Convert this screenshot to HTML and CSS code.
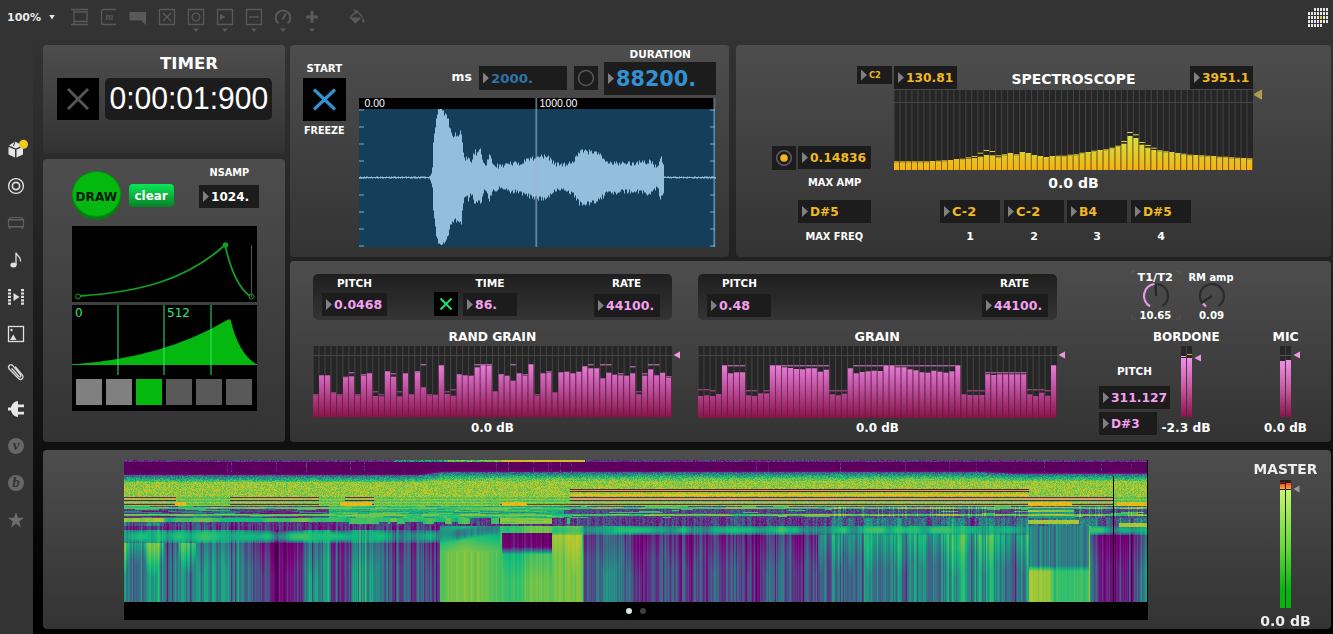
FILE: index.html
```html
<!DOCTYPE html>
<html lang="en">
<head>
<meta charset="utf-8">
<title>Granular patch</title>
<link rel="stylesheet" href="styles.css">
</head>
<body>
<div class="app">
  <nav class="sidebar">
    <svg class="side-icon" viewBox="0 0 24 24"><path fill="#e6e6e6" d="M4.500 10l6.500 2.500v8l-6.500-3zM12.500 12.500l6.500-2.500v7.500l-6.500 3zM5 8.500L11 4.500l7.500 4-6.700 3z"/><path d="M11 4.500l-1.500 4.500" stroke="#333" fill="none"/><circle cx="19.500" cy="7.300" r="4.500" fill="#f0cc20"/></svg>
    <svg class="side-icon" viewBox="0 0 24 24" fill="none" stroke="#e0e0e0"><circle cx="12" cy="12" r="7.400" stroke-width="1.400"/><circle cx="12" cy="12" r="3.600" stroke-width="1.700"/></svg>
    <svg class="side-icon" viewBox="0 0 24 24" fill="none" stroke="#626262" stroke-width="1.200"><path d="M4.500 8.500h15v7.500h-15zM5.500 6.500h13M4 9h16M4 15.500h16M6 6v2.500M18 6v2.500M6 16v2.500M18 16v2.500"/></svg>
    <svg class="side-icon" viewBox="0 0 24 24"><ellipse cx="9.500" cy="17" rx="3.100" ry="2.500" fill="#e0e0e0"/><path d="M12 17V4.500c.5 3.500 5 3.800 4.500 9" fill="none" stroke="#e0e0e0" stroke-width="1.300"/></svg>
    <svg class="side-icon" viewBox="0 0 24 24"><path d="M5.500 4v16M18.500 4v16" stroke="#e0e0e0" stroke-width="3" stroke-dasharray="2.200 1.200"/><path d="M9.500 8l6 4-6 4z" fill="#e0e0e0"/></svg>
    <svg class="side-icon" viewBox="0 0 24 24"><rect x="4.500" y="4.500" width="15" height="15" fill="none" stroke="#e0e0e0" stroke-width="1.300"/><path d="M6 18l3.300-5.500L12.500 18z" fill="#e0e0e0"/><circle cx="7.500" cy="8" r="1.200" fill="#e0e0e0"/></svg>
    <svg class="side-icon" viewBox="0 0 24 24" fill="none" stroke="#d8d8d8" stroke-width="1.300" stroke-linecap="round"><path d="M11.500 7l6.500 7.700c2.500 3.200-.8 6.300-3.500 3.800L5.500 9.300C3 6.300 6.300 3.300 8.800 5.600l7.700 9.200c1 1.700-.7 2.600-1.800 1.500L8 8.800"/></svg>
    <svg class="side-icon" viewBox="0 0 24 24" fill="#e6e6e6"><path d="M4 10.500h3C8 7 10 4.500 14 4v3.500h6v2.800h-6v4.400h6v2.800h-6V20c-4-.5-6-3-7-6.500H4z"/></svg>
    <div class="side-badge"><span>v</span></div>
    <div class="side-badge"><span>b</span></div>
    <svg class="side-icon" viewBox="0 0 24 24" fill="#6c6c6c"><path d="M12 4l2 5.800h6l-4.800 3.600 1.800 6-5-3.700-5 3.700 1.800-6L4 9.800h6z"/></svg>
  </nav>

  <main class="main">
    <header class="toolbar">
      <div class="zoom-level"><span class="t" data-w="36">100%</span><i class="caret"></i></div>
      <div class="tools">
        <svg class="tool" viewBox="0 0 18 25"><path d="M0 1.500h17M3 1v16M0 16.500h17M3 4h13M3 13.500h13M16 3v12"/></svg>
        <svg class="tool" viewBox="0 0 18 25"><path d="M16 1.500H3.500a2 2 0 0 0-2 2v11a2 2 0 0 0 2 2H16"/><text x="5.500" y="12">m</text></svg>
        <svg class="tool" viewBox="0 0 18 25"><path class="solid" d="M.5 4h16.500v13l-5-4.500H.5z"/></svg>
        <svg class="tool" viewBox="0 0 18 25"><path d="M1.500 1.500h15v15h-15zM5 5l8 8M13 5l-8 8"/></svg>
        <svg class="tool" viewBox="0 0 18 25"><path d="M1.500 1.500h15v15h-15z"/><circle cx="9" cy="9" r="3.800"/><path class="solid" d="M6 20.500h6l-3 3.500z"/></svg>
        <svg class="tool" viewBox="0 0 18 25"><path d="M1.500 1.500h15v15h-15z"/><path class="solid" d="M4 6l5.500 3L4 12zM6 20.500h6l-3 3.500z"/></svg>
        <svg class="tool" viewBox="0 0 18 25"><path d="M1.500 1.500h15v15h-15zM4 9h10"/><path class="solid" d="M6 20.500h6l-3 3.500z"/></svg>
        <svg class="tool" viewBox="0 0 18 25"><path class="bold" d="M4.500 15.500a7.300 7.300 0 1 1 9 0M8.500 11.500L12 5.500"/><path class="solid" d="M6 20.500h6l-3 3.500z"/></svg>
        <svg class="tool" viewBox="0 0 18 25"><path class="plus" d="M9 3v12M3 9h12"/><path class="solid" d="M6 20.500h6l-3 3.500z"/></svg>
        <svg class="tool bucket" viewBox="0 0 18 25"><path class="solid" d="M1 9.500h12.500L7.500 15.500zM14.500 9.500c2 2.500 2.800 4 1.500 5s-2.500-1-1.500-5z"/><path d="M2 9.500L9 3l5.500 6M6 1.500l3 4"/></svg>
      </div>
      <div class="led-matrix" id="leds"></div>
    </header>

    <div class="board">
      <div class="upper">
        <div class="left-stack">
          <section class="panel timer">
            <div class="label size-l timer-title"><span class="t" data-w="58">TIMER</span></div>
            <div class="timer-row">
              <div class="toggle big"><svg viewBox="0 0 42 42"><path d="M11 11l20 20M31 11l-20 20" stroke="#555" stroke-width="3"/></svg></div>
              <div class="clock"><span class="t" data-w="159">0:00:01:900</span></div>
            </div>
          </section>

          <section class="panel envelope">
            <div class="envelope-head">
              <div class="draw"><span class="t" data-w="42">DRAW</span></div>
              <div class="clear"><span class="t" data-w="33">clear</span></div>
              <div class="nsamp">
                <div class="label tall"><span class="t" data-w="40">NSAMP</span></div>
                <div class="num white"><span class="t" data-w="38">1024.</span></div>
              </div>
            </div>
            <svg class="curve" viewBox="0 0 185 76">
              <path d="M179.500 19v52" stroke="#555" stroke-width="1" fill="none"/>
              <path d="M8 70C66 66 113 55 153 19Q162 59 178 70" fill="none" stroke="#12a022" stroke-width="1.800"/>
              <circle cx="6" cy="70.500" r="2.500" fill="#000" stroke="#12a022"/>
              <circle cx="179.500" cy="70.500" r="2.500" fill="none" stroke="#12a022"/>
              <circle cx="153.500" cy="19" r="2.800" fill="#12a022"/>
            </svg>
            <div class="buffer">
              <svg class="buffer-plot" viewBox="0 0 185 70">
                <path d="M0 59.500Q92 53 156 14.500h2.500Q167 50 185 59.500z" fill="#04b810"/>
                <path d="M0 59.500h185" stroke="#04b810"/>
                <path d="M46 0v70M92 0v70M139 0v70" stroke="#30e878" stroke-opacity=".5" stroke-width="2"/>
                <text x="3" y="12">0</text><text x="95" y="12">512</text>
              </svg>
              <div class="presets"><i class="used"></i><i class="used"></i><i class="active"></i><i></i><i></i><i></i></div>
            </div>
          </section>
        </div>

        <div class="right-stack">
          <div class="top-pair">
            <section class="panel wave">
              <div class="wave-side">
                <div class="label tall"><span class="t" data-w="36">START</span></div>
                <div class="toggle start"><svg viewBox="0 0 43 43"><path d="M11 11.500l21 20M32 11.500l-21 20" stroke="#3490d0" stroke-width="3.200"/></svg></div>
                <div class="label tall"><span class="t" data-w="41">FREEZE</span></div>
              </div>
              <div class="wave-main">
                <div class="wave-head">
                  <div class="ms"><span class="t" data-w="20">ms</span></div>
                  <div class="num blue dim ms-num"><span class="t" data-w="42">2000.</span></div>
                  <div class="radio off"><svg viewBox="0 0 24 24"><circle cx="12" cy="12" r="7.500" fill="none" stroke="#555" stroke-width="1.600"/></svg></div>
                  <div class="duration">
                    <div class="label"><span class="t" data-w="61">DURATION</span></div>
                    <div class="num blue huge"><span class="t" data-w="80">88200.</span></div>
                  </div>
                </div>
                <svg class="wave-plot" id="wave" viewBox="0 0 357 149"></svg>
              </div>
            </section>

            <section class="panel spectro">
              <div class="spectro-head">
                <div class="num gold note"><span class="t" data-w="12">C2</span></div>
                <div class="num gold low"><span class="t" data-w="47">130.81</span></div>
                <div class="spectro-title"><span class="t" data-w="124">SPECTROSCOPE</span></div>
                <div class="num gold low"><span class="t" data-w="47">3951.1</span></div>
              </div>
              <div class="spectro-body">
                <div class="radio"><svg viewBox="0 0 24 24"><circle cx="12" cy="12" r="7.300" fill="none" stroke="#5c5c5c" stroke-width="1.600"/><circle cx="12" cy="12" r="3.800" fill="#f0b81c"/></svg></div>
                <div class="num gold amp"><span class="t" data-w="56">0.14836</span></div>
                <svg class="spectro-plot" id="spectro" viewBox="0 0 359 80"></svg>
              </div>
              <div class="spectro-caption">
                <div class="label cell-73"><span class="t" data-w="53">MAX AMP</span></div>
                <div class="db wide"><span class="t" data-w="50">0.0 dB</span></div>
              </div>
              <div class="notes">
                <div class="num gold cell-73"><span class="t" data-w="29">D#5</span></div>
                <div class="num gold n1"><span class="t" data-w="24">C-2</span></div>
                <div class="num gold n2"><span class="t" data-w="24">C-2</span></div>
                <div class="num gold n3"><span class="t" data-w="18">B4</span></div>
                <div class="num gold n4"><span class="t" data-w="29">D#5</span></div>
              </div>
              <div class="notes captions">
                <div class="label cell-73"><span class="t" data-w="58">MAX FREQ</span></div>
                <div class="label n1">1</div><div class="label n2">2</div><div class="label n3">3</div><div class="label n4">4</div>
              </div>
            </section>
          </div>

          <section class="panel grains">
            <div class="grain first">
              <div class="strip">
                <div class="field"><div class="label"><span class="t" data-w="35">PITCH</span></div><div class="num pink w65"><span class="t" data-w="48">0.0468</span></div></div>
                <div class="toggle small"><svg viewBox="0 0 24 24"><path d="M6.500 6.500l11 11M17.500 6.500l-11 11" stroke="#20e068" stroke-width="2"/></svg></div>
                <div class="field time"><div class="label"><span class="t" data-w="29">TIME</span></div><div class="num pink w54"><span class="t" data-w="22">86.</span></div></div>
                <div class="field rate lower"><div class="label"><span class="t" data-w="29">RATE</span></div><div class="num pink w66"><span class="t" data-w="48">44100.</span></div></div>
              </div>
              <div class="label size-m"><span class="t" data-w="88">RAND GRAIN</span></div>
              <svg class="grain-plot" id="rand" viewBox="0 0 359 72"></svg>
              <div class="db"><span class="t" data-w="43">0.0 dB</span></div>
            </div>
            <div class="grain second">
              <div class="strip">
                <div class="field lower"><div class="label"><span class="t" data-w="35">PITCH</span></div><div class="num pink w64"><span class="t" data-w="31">0.48</span></div></div>
                <div class="field rate2 lower"><div class="label"><span class="t" data-w="29">RATE</span></div><div class="num pink w66"><span class="t" data-w="48">44100.</span></div></div>
              </div>
              <div class="label size-m"><span class="t" data-w="45">GRAIN</span></div>
              <svg class="grain-plot" id="grain" viewBox="0 0 359 72"></svg>
              <div class="db"><span class="t" data-w="43">0.0 dB</span></div>
            </div>
            <div class="mixer">
              <div class="dials">
                <div class="dial">
                  <div class="label"><span class="t" data-w="35">T1/T2</span></div>
                  <svg viewBox="0 0 28 28"><path d="M14 14L13.500 1" stroke="#262626"/><path d="M8 24.300A12 12 0 0 1 12.500 2" stroke="#f098e8"/><path d="M15.500 2A12 12 0 0 1 20.500 24" stroke="#2a2a2a"/><path class="focus" d="M-10-8v-3h3M34-11h4v3M-10 33v4h4M34 37h4v-4"/></svg>
                  <div class="label"><span class="t" data-w="32">10.65</span></div>
                </div>
                <div class="dial">
                  <div class="label"><span class="t" data-w="45">RM amp</span></div>
                  <svg viewBox="0 0 28 28"><path d="M14 14L4.500 20M4.500 21.500A12 12 0 1 1 20.500 24" stroke="#2a2a2a"/><path d="M5 21.500L8 24.500" stroke="#f098e8"/></svg>
                  <div class="label"><span class="t" data-w="25">0.09</span></div>
                </div>
              </div>
              <div class="mixer-row">
                <div class="bordone-pitch">
                  <div class="label"><span class="t" data-w="35">PITCH</span></div>
                  <div class="num pink"><span class="t" data-w="56">311.127</span></div>
                  <div class="num pink w58"><span class="t" data-w="29">D#3</span></div>
                </div>
                <div class="meter">
                  <div class="label size-m"><span class="t" data-w="67">BORDONE</span></div>
                  <svg viewBox="0 0 11 72">
                    <defs><linearGradient id="pinkMeter" x1="0" y1="0" x2="0" y2="1"><stop offset="0" stop-color="#f090e8"/><stop offset=".5" stop-color="#c858a4"/><stop offset="1" stop-color="#8c1248"/></linearGradient></defs>
                    <path d="M0 0h5v71H0zM6 0h5v71H6z" fill="#262626"/><path d="M0 12h5v59H0zM6 12h5v59H6z" fill="url(#pinkMeter)"/>
                    <path d="M0 10.500h5" stroke="#f0a0e8"/><path d="M6 8.500h5" stroke="#d8a818"/><path d="M20 8.500v7l-6.500-3.500z" fill="#f098e8"/>
                  </svg>
                  <div class="db"><span class="t" data-w="49">-2.3 dB</span></div>
                </div>
                <div class="meter mic">
                  <div class="label size-m"><span class="t" data-w="26">MIC</span></div>
                  <svg viewBox="0 0 11 72">
                    <path d="M0 0h5v71H0zM6 0h5v71H6z" fill="#262626"/><path d="M0 9.500h11" stroke="#555"/><path d="M0 15h5v56H0zM6 14h5v57H6z" fill="url(#pinkMeter)"/>
                    <path d="M20 5.500v7l-6.500-3.500z" fill="#f098e8"/>
                  </svg>
                  <div class="db"><span class="t" data-w="43">0.0 dB</span></div>
                </div>
              </div>
            </div>
          </section>
        </div>
      </div>

      <section class="panel output">
        <div class="sonogram">
          <canvas id="sono" width="1024" height="142"></canvas>
          <div class="pager"><i class="on"></i><i></i></div>
        </div>
        <div class="master">
          <div class="master-title"><span class="t" data-w="64">MASTER</span></div>
          <svg viewBox="0 0 11 128">
            <defs><linearGradient id="greenMeter" x1="0" y1="0" x2="0" y2="1"><stop offset="0" stop-color="#c4f470"/><stop offset=".5" stop-color="#60d838"/><stop offset=".85" stop-color="#04b410"/><stop offset="1" stop-color="#04b410"/></linearGradient>
            <linearGradient id="hotMeter" x1="0" y1="0" x2="0" y2="1"><stop offset="0" stop-color="#f04818"/><stop offset="1" stop-color="#ffa838"/></linearGradient></defs>
            <path d="M0 0h11v128H0z" fill="#2a1c18"/><path d="M0 4h5v5H0zM6 3h5v6H6z" fill="url(#hotMeter)"/><path d="M0 2.500h5" stroke="#981818"/>
            <path d="M0 10h5v118H0zM6 10h5v118H6z" fill="url(#greenMeter)"/><path d="M19.500 5.500v7L13.500 9z" fill="#999"/>
          </svg>
          <div class="master-value"><span class="t" data-w="50">0.0 dB</span></div>
        </div>
      </section>
    </div>
  </main>
</div>
<script src="plots.js"></script>
</body>
</html>
```

FILE: styles.css
```css
* { box-sizing: border-box; }
body { margin: 0; background: #000; color: #fff; font-family: "DejaVu Sans", Verdana, sans-serif; font-weight: bold; font-size: 13px; overflow: hidden; }
svg { display: block; overflow: visible; flex: none; }
i { display: block; }
.t { display: inline-block; white-space: nowrap; }

.app { display: flex; width: 1333px; height: 634px; background: linear-gradient(#333 30px, #2b2b2b 150px, #111 440px, #000 600px); }
.sidebar { width: 33px; flex: none; background: #333; padding: 137px 0 0 4px; display: flex; flex-direction: column; gap: 13.100px; }
.side-icon { width: 24px; height: 24px; }
.side-badge { width: 16px; height: 16px; margin: 4px; border-radius: 50%; background: #676767; color: #333; font: italic bold 15px/14px "Liberation Serif", serif; text-align: center; flex: none; }

.main { width: 1300px; flex: none; display: flex; flex-direction: column; }
.toolbar { height: 37px; margin-left: -33px; padding-left: 7px; background: #333; display: flex; flex: none; }
.zoom-level { display: flex; align-items: center; height: 34px; width: 64px; flex: none; font-size: 11px; color: #e8e8e8; }
.zoom-level .t { width: 36px; transform-origin: left; }
.caret { width: 6px; height: 5px; margin-left: 6px; background: #e8e8e8; clip-path: polygon(0 0, 100% 0, 50% 100%); }
.tools { display: flex; gap: 11px; padding-top: 8px; }
.tool { width: 18px; height: 25px; fill: none; stroke: #595959; stroke-width: 1.3; }
.tool .solid { fill: #595959; stroke: none; }
.tool .bold { stroke-width: 2; }
.tool .plus { stroke-width: 3; }
.tool text { font: italic bold 10px "Liberation Serif", serif; fill: #595959; stroke: none; }
.bucket { margin-left: 16px; }
.led-matrix { margin: 8px 0 0 auto; padding-right: 4px; width: 25px; display: grid; grid-template-columns: repeat(7, 2px); grid-auto-rows: 3px; gap: 1px; flex: none; }
.led { background: #e8e8e8; }
.led.blank { background: none; }
.led.hot { background: #e8d020; }

.board { padding: 8px 0 0 10px; display: flex; flex-direction: column; gap: 8px; }
.upper { display: flex; gap: 5px; }
.left-stack { display: flex; flex-direction: column; gap: 6px; width: 242px; }
.right-stack { display: flex; flex-direction: column; gap: 4px; width: 1041px; }
.top-pair { display: flex; gap: 7px; }
.panel { background: linear-gradient(#4d4d4d, #333); border-radius: 4px; flex: none; }

.label { display: flex; justify-content: center; align-items: center; height: 10px; font-size: 11px; flex: none; }
.label.tall { height: 14px; }
.label.size-m { height: 16px; font-size: 13px; }
.label.size-l { height: 16px; font-size: 16px; }
.db { display: flex; justify-content: center; align-items: center; height: 16px; margin-bottom: 2px; font-size: 13px; }

.num { display: flex; align-items: center; height: 23px; padding-left: 4px; background: #1c1c1c; overflow: hidden; flex: none; }
.num::before { content: ""; width: 6px; height: 11px; margin-right: 2px; background: #808080; clip-path: polygon(0 0, 100% 50%, 0 100%); flex: none; }
.num .t { transform-origin: left; }
.white { color: #fff; }
.gold { color: #f2b822; }
.pink { color: #f4a0f0; }
.blue { color: #3490d0; }
.blue.dim { color: #2c74a8; }
.huge { height: 33px; font-size: 20.5px; }

.toggle { background: #000; flex: none; }
.toggle.big { width: 42px; height: 42px; }
.toggle.small { width: 24px; height: 24px; margin: 14px 5px 0 47px; }
.radio { width: 24px; height: 24px; background: #1c1c1c; flex: none; }

.timer { height: 108px; padding-top: 10px; }
.timer-title { padding-left: 50px; }
.timer-row { display: flex; gap: 6px; padding: 7px 0 0 14px; }
.clock { width: 167px; height: 42px; border-radius: 5px; background: #1c1c1c; display: flex; justify-content: center; align-items: center; font: 31px/42px "Liberation Sans", Arial, sans-serif; }

.envelope { height: 283px; padding: 6px 0 0 29px; }
.envelope-head { display: flex; height: 61px; }
.draw { width: 49px; height: 46px; margin-top: 6px; border-radius: 50%; background: #04b810; border: 1px solid #059010; box-shadow: 0 3px 1px #087c10; color: #041804; font-size: 13px; display: flex; align-items: center; justify-content: center; padding-top: 4px; }
.clear { width: 45px; height: 23px; margin: 19px 25px 0 8px; border-radius: 4px; background: linear-gradient(#08e858, #088024); font-size: 13px; display: flex; align-items: center; justify-content: center; }
.nsamp { width: 60px; display: flex; flex-direction: column; gap: 6px; }
.curve { width: 185px; height: 76px; background: #000; }
.buffer { width: 185px; height: 106px; margin-top: 3px; background: #000; }
.buffer-plot { width: 185px; height: 70px; }
.buffer-plot text { font: 12px "DejaVu Sans", sans-serif; fill: #30e878; }
.presets { display: flex; gap: 4px; padding: 4px 0 0 4px; }
.presets i { width: 26px; height: 26px; background: #595959; }
.presets .used { background: #808080; }
.presets .active { background: #04b810; }

.wave { width: 439px; height: 212px; display: flex; gap: 13px; padding-left: 13px; }
.wave-side { width: 43px; padding-top: 16px; }
.start { height: 43px; margin: 3px 0 2px; }
.wave-main { width: 357px; }
.wave-head { display: flex; height: 53px; }
.ms { width: 22px; height: 24px; margin: 19px 6px 0 92px; display: flex; justify-content: center; align-items: center; }
.ms-num { width: 88px; height: 24px; margin-top: 21px; }
.off { margin: 21px 6px 0 7px; }
.duration { width: 112px; padding-top: 4px; display: flex; flex-direction: column; gap: 3px; }
.wave-plot { width: 357px; height: 149px; }
.wave-plot text { font: 10.500px "Liberation Sans", Arial, sans-serif; fill: #fff; }

.spectro { width: 595px; height: 212px; }
.spectro-head { display: flex; height: 45px; width: 517px; padding: 21px 0 0 121px; }
.note { width: 35px; height: 18px; margin-right: 2px; font-size: 9px; }
.low { width: 63px; }
.spectro-title { flex: 1; height: 26px; display: flex; justify-content: center; align-items: center; font-size: 14.500px; }
.spectro-body { display: flex; height: 80px; padding-left: 36px; }
.spectro-body .radio { margin: 56px 2px 0 0; }
.amp { width: 73px; margin: 56px 23px 0 0; }
.spectro-plot { width: 359px; height: 80px; }
.spectro-caption { display: flex; padding-left: 62px; height: 30px; }
.spectro-caption .label { height: 24px; }
.cell-73 { width: 73px; }
.wide { width: 359px; height: 26px; margin: 0 0 0 23px; font-size: 14px; }
.notes { display: flex; padding-left: 62px; }
.notes .cell-73 { margin-right: 69px; }
.n1, .n2, .n3, .n4 { width: 60px; margin-right: 4px; }
.n2 { margin-right: 3px; }
.captions { padding-top: 8px; }

.grains { height: 181px; display: flex; padding-left: 23px; }
.grain { width: 359px; padding-top: 13px; }
.grain .size-m { padding-bottom: 0; }
.second { margin-left: 26px; }
.strip { height: 46px; margin-bottom: 8px; border-radius: 5px; background: linear-gradient(#1f1f1f, #343434); display: flex; padding: 4px 0 0 9px; }
.field { display: flex; flex-direction: column; gap: 5px; height: 40px; }
.field.lower { gap: 6px; }
.rate { margin-left: 77px; }
.rate2 { margin-left: 211px; }
.w54 { width: 54px; } .w58 { width: 58px; } .w64 { width: 64px; } .w65 { width: 65px; } .w66 { width: 66px; }
.grain-plot { width: 359px; height: 72px; margin: 2px 0 1px; }
.mixer { width: 232px; margin-left: 42px; }
.dials { display: flex; gap: 5px; height: 67px; padding: 11px 0 0 31px; }
.dial { width: 51px; display: flex; flex-direction: column; align-items: center; }
.dial svg { width: 28px; height: 28px; fill: none; stroke-width: 2.2; }
.dial .focus { stroke: #666; stroke-width: .6; }
.mixer-row { display: flex; }
.bordone-pitch { width: 71px; padding-top: 38px; display: flex; flex-direction: column; gap: 3px; }
.bordone-pitch .label { margin-bottom: 7px; }
.meter { width: 29px; margin-left: 2px; display: flex; flex-direction: column; align-items: center; }
.meter .db, .meter .label { width: 30px; }
.mic { margin-left: 70px; }
.meter svg { width: 11px; height: 72px; margin: 2px 0 1px; }

.output { width: 1288px; height: 179px; display: flex; padding: 10px 0 0 81px; }
.sonogram { width: 1024px; height: 160px; background: #000; }
.sonogram canvas { display: block; }
.pager { display: flex; gap: 8px; padding: 6px 0 0 502px; }
.pager i { width: 6px; height: 6px; border-radius: 50%; background: #3c4040; }
.pager .on { background: #d8e8e8; }
.master { width: 89px; margin-left: 93px; display: flex; flex-direction: column; align-items: center; font-size: 14px; color: #eee; }
.master-title { height: 16px; line-height: 16px; margin: 1px 0 3px; }
.master svg { width: 11px; height: 128px; }
.master-value { height: 18px; line-height: 18px; margin-top: 4px; }
```

FILE: plots.js
```js
// Text widths: each .t label is scaled to its own data-w width.
document.querySelectorAll('.t').forEach(function (el) {
  el.style.transform = 'scaleX(' + (el.dataset.w / el.scrollWidth) + ')';
});

let seed = 7;
function rnd() { seed = (seed * 1664525 + 1013904223) >>> 0; return seed / 4294967296; }

// Activity grid in the toolbar
const leds = document.getElementById('leds');
for (let r = 0; r < 5; r++) for (let c = 0; c < 7; c++) {
  const d = document.createElement('div');
  const blank = (r === 0 && c < 2) || (r === 4 && c > 4);
  d.className = 'led' + (blank ? ' blank' : '') + (r === 2 && c === 4 ? ' hot' : '');
  leds.appendChild(d);
}

// Waveform: half-heights at x positions, filled symmetrically
function interp(points, x) {
  for (let i = 1; i < points.length; i++) {
    if (x <= points[i][0]) {
      const a = points[i - 1], b = points[i];
      return a[1] + (b[1] - a[1]) * (x - a[0]) / (b[0] - a[0]);
    }
  }
  return points[points.length - 1][1];
}
const env = [[0, .5], [69, .5], [71, 2], [73, 10], [74, 35], [77, 58], [79, 68], [83, 68], [88, 60], [92, 45], [93, 42], [97, 43], [102, 45], [104, 25], [106, 17], [109, 22], [111, 15], [116, 26], [118, 23], [121, 27], [124, 14], [127, 13], [130, 23], [133, 14], [140, 11], [150, 14], [160, 14], [170, 19], [180, 21], [187, 21], [197, 13], [207, 13], [215, 18], [220, 26], [228, 26], [240, 23], [246, 16], [260, 14], [275, 14], [290, 16], [297, 11], [299, 13], [301, 21], [303, 16], [304.5, 15], [305, .5], [357, .5]];
let up = '', down = '';
for (let x = 0; x < 357; x++) {
  const h = interp(env, x), j = h > 3 ? 5 : 1.6;
  const a = Math.round(h + (rnd() - .5) * j), b = Math.round(h + (rnd() - .5) * j);
  const ya = 79.5 - Math.min(68.5, Math.max(.5, a)), yb = 79.5 + Math.min(67.5, Math.max(.5, b));
  up += 'L' + x + ' ' + ya + 'H' + (x + 1);
  down = 'L' + (x + 1) + ' ' + yb + 'H' + x + down;
}
let ticks = '';
for (let k = 0; k < 9; k++) ticks += 'M0 ' + (12 + k * 17) + 'h5M351 ' + (12 + k * 17) + 'h5';
document.getElementById('wave').innerHTML =
  '<path d="M0 0h356v11H0z" fill="#000"/><path d="M0 11h357v138H0z" fill="#143e5a"/>' +
  '<path d="' + ticks + '" stroke="#5c88a4" stroke-width="1.6"/>' +
  '<path d="M' + up.slice(1) + down + 'z" fill="#94bfdc"/>' +
  '<path d="M177.300 0v149M355.300 0v149" stroke="#9cb8cc" stroke-opacity=".6" stroke-width="1.8"/>' +
  '<text x="5.500" y="9.300">0.00</text><text x="180.500" y="9.300">1000.00</text>';

// Banded level display shared by the spectroscope and the two grain views
function bands(id, tops, peaks, o) {
  const w = 359 / 60;
  let s = '<defs><linearGradient id="' + id + 'Fill" gradientUnits="userSpaceOnUse" x1="0" y1="' + o.gy + '" x2="0" y2="' + o.h + '">' + o.stops + '</linearGradient></defs>';
  s += '<rect width="359" height="' + o.bg + '" fill="#262626"/><path d="M0 ' + o.line + 'h359" stroke="#444"/>';
  for (let i = 0; i < 60; i++) {
    const x = i * w, y = o.h - tops[i];
    s += '<rect x="' + (x - .5).toFixed(2) + '" y="0" width="1" height="' + y + '" fill="#444"/>';
    s += '<rect x="' + x.toFixed(2) + '" y="' + y.toFixed(1) + '" width="' + (w - .7).toFixed(2) + '" height="' + tops[i].toFixed(1) + '" fill="url(#' + id + 'Fill)"/>';
    s += '<rect x="' + (x + w - .7).toFixed(2) + '" y="' + y.toFixed(1) + '" width=".7" height="' + tops[i].toFixed(1) + '" fill="' + o.edge + '"/>';
    if (peaks[i] > tops[i]) s += '<rect x="' + x.toFixed(2) + '" y="' + (o.h - peaks[i]).toFixed(1) + '" width="5.5" height="1" fill="url(#' + id + 'Fill)"/>';
  }
  document.getElementById(id).innerHTML = s + o.marker;
}

const st = [367, 367, 367, 367, 367, 367, 366, 365, 364, 363, 360, 359, 356, 354, 350, 345, 346, 352, 346, 342, 346, 339, 342, 348, 351, 354, 351, 350, 350, 347, 346, 341, 339, 335, 333, 331, 326, 320, 311, 288, 294, 314, 323, 330, 334, 337, 339, 342, 344, 347, 348, 349, 350, 351, 353, 353, 355, 356, 357, 358];
const sp = st.map(function (v) { return v - 3; });
sp[12] = 352; sp[13] = 348; sp[14] = 338; sp[15] = 330; sp[16] = 333; sp[17] = 346; sp[38] = 303; sp[39] = 276; sp[40] = 283; sp[41] = 306; sp[42] = 315; sp[43] = 323;
bands('spectro', st.map(function (v) { return (390 - v) / 3; }), sp.map(function (v) { return (390 - v) / 3; }), {
  h: 80, bg: 80, gy: 46, line: 12.5, edge: '#806014',
  stops: '<stop offset="0" stop-color="#d8e048"/><stop offset=".6" stop-color="#e4c828"/><stop offset="1" stop-color="#f6b010"/>',
  marker: '<path d="M367.500 0v9L360 4.500z" fill="#a89868" stroke="#c8a030"/>'
});

const pinkStops = '<stop offset="0" stop-color="#e880dc"/><stop offset=".45" stop-color="#c050a0"/><stop offset="1" stop-color="#8a1248"/>';
function grainBands(id, base, tops, peakMap) {
  bands(id, tops.map(function (v) { return (base - v) / 3; }), tops.map(function (v, i) { return peakMap[i] ? (base - peakMap[i]) / 3 : 0; }), {
    h: (base - 258) / 3, bg: 71, gy: 18, line: 9.5, edge: '#70204c', stops: pinkStops,
    marker: '<path d="M367 5.500v7L360.500 9z" fill="#f098e8"/>'
  });
}
grainBands('rand', 472,
  [406, 346, 346, 400, 406, 353, 349, 406, 347, 340, 408, 409, 334, 350, 409, 340, 403, 337, 382, 406, 404, 316, 402, 407, 343, 346, 347, 322, 316, 317, 394, 344, 347, 362, 340, 347, 313, 407, 340, 338, 397, 337, 335, 340, 335, 319, 325, 325, 355, 338, 344, 346, 347, 340, 403, 347, 328, 346, 338, 353],
  { 0: 403, 3: 397, 4: 403, 5: 350, 6: 337, 7: 403, 8: 343, 10: 394, 11: 403, 13: 340, 14: 394, 17: 334, 18: 313, 19: 403, 22: 394, 23: 388, 27: 313, 28: 313, 29: 313, 31: 343, 33: 313, 35: 343, 37: 403, 39: 334, 46: 313, 48: 313, 49: 313, 51: 340, 53: 319, 54: 394, 55: 340, 56: 313, 57: 313, 59: 349 });
const gp = {};
function range(a, b, v) { for (let i = a; i <= b; i++) gp[i] = v; }
range(0, 1, 388); range(2, 2, 391); range(5, 7, 316); range(8, 9, 391); range(11, 11, 391); range(14, 21, 316); range(22, 24, 391); range(26, 42, 316); range(45, 47, 391); range(48, 54, 337); range(55, 57, 388); range(58, 58, 391);
grainBands('grain', 474,
  [408, 406, 408, 402, 316, 340, 337, 337, 406, 408, 400, 400, 316, 316, 322, 324, 327, 328, 325, 325, 335, 329, 403, 406, 401, 325, 340, 336, 334, 332, 333, 316, 316, 322, 322, 328, 331, 337, 338, 332, 335, 338, 334, 316, 403, 405, 405, 405, 343, 345, 343, 343, 343, 343, 343, 403, 408, 398, 407, 316], gp);

// Sonogram
const ctx = document.getElementById('sono').getContext('2d');
const img = ctx.createImageData(1024, 142);
const map = [[0, 72, 0, 76], [.16, 124, 0, 124], [.3, 78, 76, 136], [.42, 44, 128, 134], [.54, 16, 188, 126], [.68, 124, 196, 68], [.8, 190, 200, 44], [.9, 228, 192, 28], [1, 244, 158, 24]];
function color(v) {
  v = Math.max(0, Math.min(1, v));
  for (let i = 1; i < map.length; i++) if (v <= map[i][0]) {
    const a = map[i - 1], b = map[i], t = (v - a[0]) / (b[0] - a[0]);
    return [a[1] + (b[1] - a[1]) * t, a[2] + (b[2] - a[2]) * t, a[3] + (b[3] - a[3]) * t];
  }
  return [244, 158, 24];
}
function smooth(n, step) {
  const k = [], out = [];
  for (let i = 0; i <= n / step + 2; i++) k.push(rnd());
  for (let x = 0; x < n; x++) {
    const f = x / step, i = Math.floor(f), t = f - i, u = t * t * (3 - 2 * t);
    out.push(k[i] * (1 - u) + k[i + 1] * u);
  }
  return out;
}
const raw = [], col = [], col2 = [];
for (let x = 0; x < 1026; x++) raw.push(rnd());
for (let x = 0; x < 1024; x++) { col.push(raw[x] * .65 + raw[x + 1] * .35); col2.push(rnd()); }
const slow = smooth(1024, 14), beads = smooth(1024, 9), beads2 = smooth(1024, 17), reach = smooth(1024, 6);
const low = [[0, .42], [40, .48], [48, .42], [112, .42], [125, .34], [145, .3], [150, .2], [177, .22], [180, .5], [204, .5], [208, .28], [224, .3], [227, .5], [246, .46], [256, .36], [315, .36], [316, .63], [340, .7], [376, .63], [390, .58], [397, .6], [408, .67], [458, .68], [460, .3], [480, .42], [500, .42], [515, .29], [690, .29], [700, .42], [800, .44], [862, .43], [904, .44], [905, .75], [925, .72], [930, .58], [965, .6], [966, .3], [1010, .24], [1014, .4], [1024, .42]];
function within(x, a, b) { return x >= a && x < b; }
for (let y = 0; y < 142; y++) {
  let run = rnd(), runLeft = 0;
  for (let x = 0; x < 1024; x++) {
    if (runLeft-- <= 0) { run = rnd(); runLeft = 4 + rnd() * 22; }
    const n = rnd(), edge = x < 295 ? 15 : x < 315 ? 15 - (x - 295) / 7 : x < 860 ? 12 : x < 890 ? 12 + (x - 860) / 20 : 13.5;
    const bright = within(x, 316, 458) || within(x, 905, 965);
    let v;
    if (y < 2) {
      v = .15 + n * .2;
      if (within(x, 270, 461)) v = x < 320 ? .3 + n * .3 : x < 378 ? .5 + n * .3 : .76 + n * .22;
    } else if (y < edge) {
      v = .03 + n * .06 + (col2[x] > .975 && y < 12 ? .25 * n : 0) + Math.max(0, y - edge + 2) * .1;
    } else if (y < edge + 7) {
      v = .35 + (y - edge) * .045 + (n - .5) * .2;
    } else if (y < 37) {
      v = .73 + (n - .5) * .24 - (y < 21 ? .06 : 0);
    } else if (y < 46) {
      v = .67 + (n - .5) * .14 + (y % 3 === 0 ? .06 : -.03);
    } else if (y < 58) {
      const dark = within(x, 106, 205) || x > 446;
      const line = y === 47 || y === 48 || y === 54 || y === 55;
      v = line ? .55 + run * .18 : (run < (dark ? .9 : .5) ? .16 + n * .16 + col[x] * .1 : .48 + run * .12);
      if (within(x, 205, 440) && !line) v = .44 + run * .22 + (n - .5) * .1;
      if (y > 50 && !line && x < 205) v = .12 + run * .3 + n * .1;
      if (x > 700) v += (col2[x] > .8 ? .15 : 0);
    } else if (y < 66) {
      const fade = Math.max(0, Math.min(1, (365 - x) / 30));
      const green = y < 62 ? (.5 + beads[x] * .18) * fade : 0;
      v = Math.max(green, .08 + (col[x] * .45 + n * .3) * .5);
      if (within(x, 205, 446) && y < 64 && reach[x] > .45) v = .5 + reach[x] * .16;
      if (within(x, 376, 428) && y < 64) v = .62 + run * .12;
      if (x < 40 || x > 700) v += .2 * reach[x];
    } else {
      v = interp(low, x) + (col[x] - .5) * .26 + (slow[x] - .5) * .14;
      if (!bright && col2[x] > .9) v -= .12;
      if (bright) v = interp(low, x) + (col[x] - .5) * .1;
      // Row of soft blobs whose centre drifts upward after the first third
      const k = Math.max(0, Math.min(1, (x - 320) / 45));
      const mid = 76 - k * 6.5, rad = 7 - k * 1.5, d = Math.abs(y - mid) / rad;
      const power = Math.min(1, .35 + beads2[x] * .9) * (1 - d * d);
      if (d < 1 && !within(x, 385, 428)) v = v * (1 - power) + (.5 + .12 * beads[x]) * power;
      else if (y < mid && !bright) v = .1 + col[x] * .3;
      const f = Math.max(0, (90 + reach[x] * 30 - y) / 30);
      if (d >= 1 && y > mid) {
        if (within(x, 0, 40) || within(x, 55, 72)) v += Math.min(1, f) * .2;
        else if (within(x, 428, 458)) v += Math.min(1, f) * .1;
        else if (within(x, 694, 905)) v += Math.min(1, f) * .1;
        else if (!bright) v -= Math.min(1, f) * .08;
      }
      if (within(x, 378, 428) && y > 72) {
        const m = Math.max(0, Math.min(1, (94 - y) / 8));
        v = v * (1 - m) + (.1 + col[x] * .24) * m;
        if (y < 120) v -= (120 - y) / 30 * .06;
      }
      if (within(x, 316, 376) && y < 92) v -= (92 - y) / 20 * .14 + (col[x] - .5) * .1;
      if (within(x, 905, 965)) {
        const m = Math.max(0, Math.min(1, (111 - y) / 6));
        v = v * (1 - m) + (.36 + (col[x] - .3) * .24) * m;
      }
    }
    // Held partials: dark hairlines with bright cores between them
    let rgb = null;
    const held = within(x, 0, 52) || within(x, 106, 195) || within(x, 221, 250) || within(x, 376, 989);
    if (within(x, 446, 905) && y >= 28 && y <= 35) {
      if (y === 29 || y === 31) rgb = [86, 40, 44]; else if (y > 33) v = .84 + run * .1;
      if (y === 30) rgb = [222, 160, 90];
    }
    if (held && y >= 37 && y <= 44) {
      if (x < 376 || x >= 446) {
        if (y === 37 || y === 40 || y === 44) rgb = [86, 48, 70];
        else if (y === 38 || y === 39 && x > 376 || y === 42) rgb = run > .35 ? [222, 158, 112] : [196, 176, 84];
      } else if (y === 44) rgb = [100, 70, 60];
    }
    if (y > 41 && y < 46 && (within(x, 51, 62) || within(x, 216, 248) || within(x, 378, 403) || within(x, 904, 948) || x > 992)) { v = .84 + n * .14; rgb = null; }
    if (within(x, 904, 955) && y > 59 && y < 64 || x > 994 && y > 62 && y < 67) v = .72 + n * .08;
    if (within(x, 904, 950) && y > 46 && y < 58) v = y % 4 > 1 ? .66 + run * .16 : .42 + n * .1;
    if (x === 989 && y > 15 || x === 1023) rgb = [0, 0, 0];
    rgb = rgb || color(v);
    const p = (y * 1024 + x) * 4;
    img.data[p] = rgb[0]; img.data[p + 1] = rgb[1]; img.data[p + 2] = rgb[2]; img.data[p + 3] = 255;
  }
}
ctx.putImageData(img, 0, 0);
```
